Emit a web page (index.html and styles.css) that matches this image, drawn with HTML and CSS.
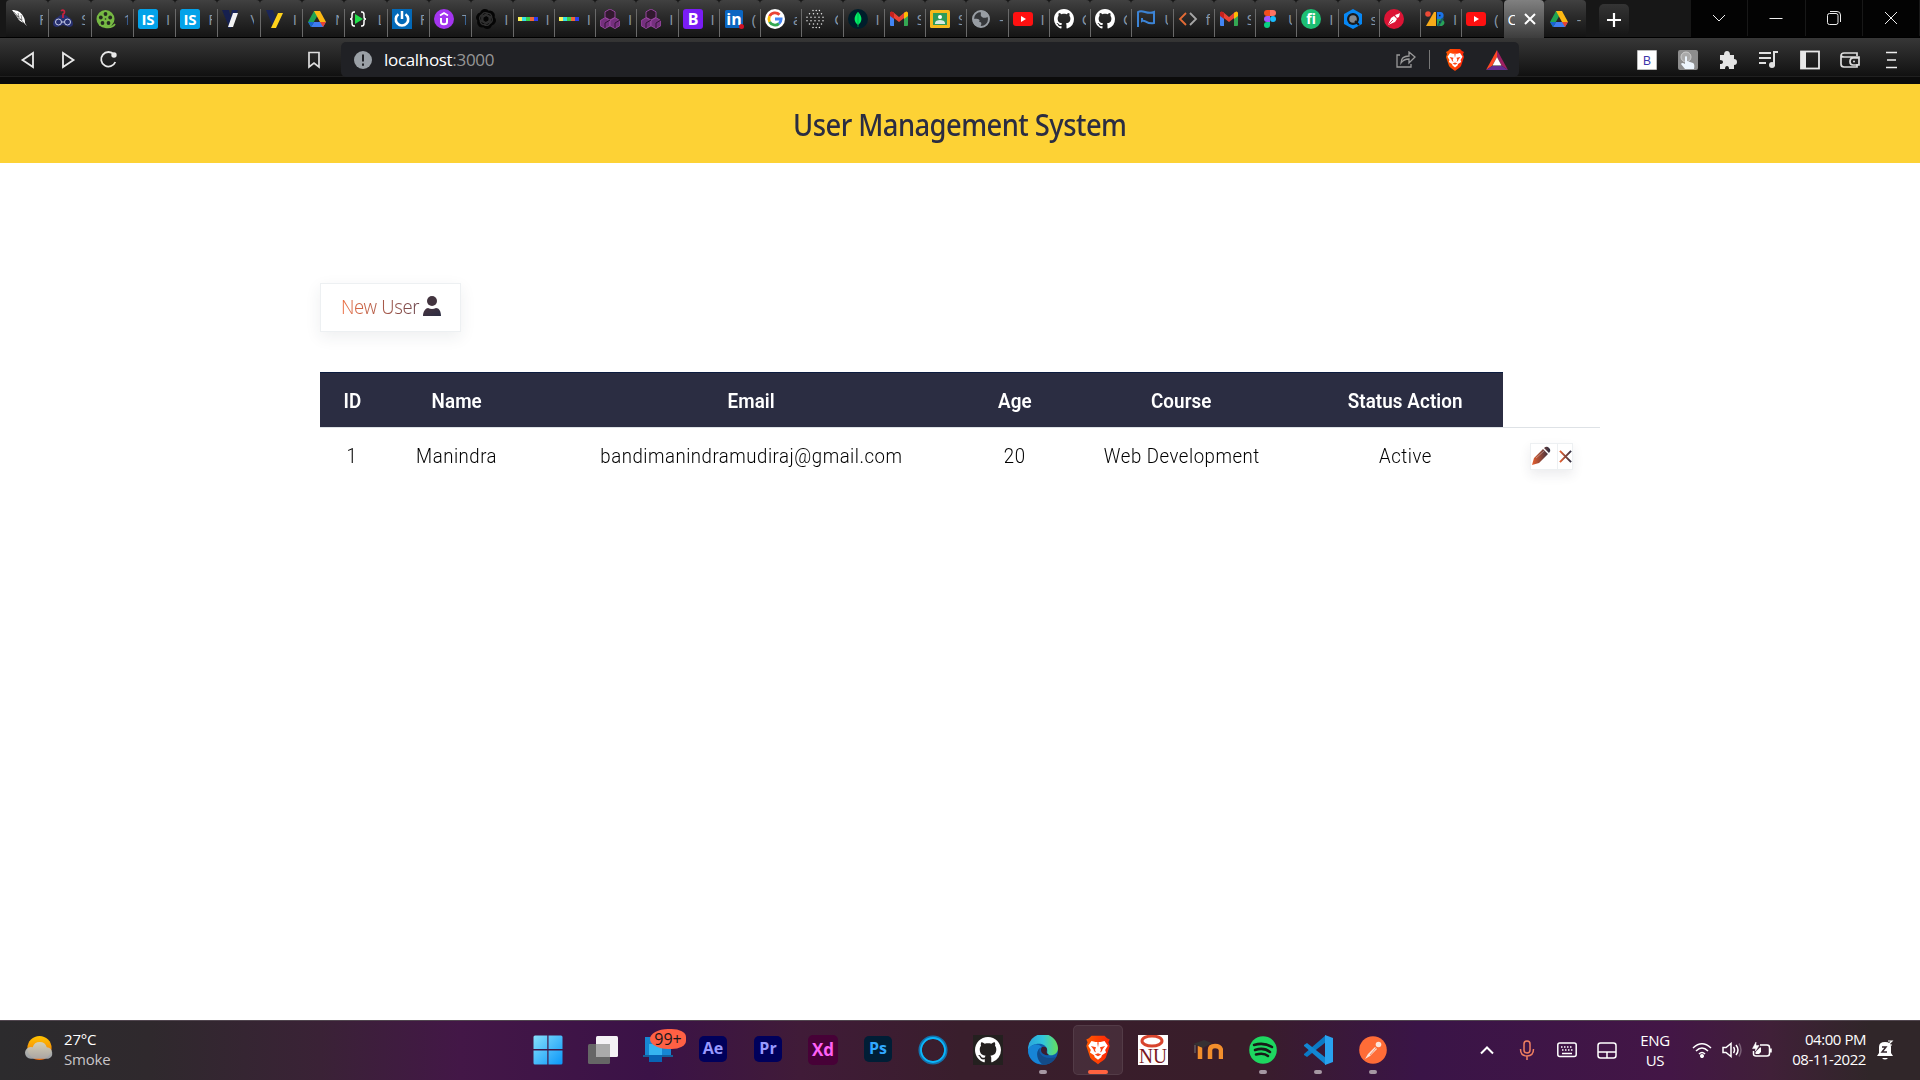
FILE: index.html
```html
<!DOCTYPE html>
<html lang="en">
<head>
<meta charset="utf-8">
<title>User Management System</title>
<link rel="stylesheet" href="styles.css">
</head>
<body>
<svg class="defs" aria-hidden="true">
  <defs>
    <linearGradient id="ink" x1="0" y1="0" x2="1" y2="0"><stop offset="0" stop-color="#e95f2e"/><stop offset="1" stop-color="#2b2d42"/></linearGradient>
    <linearGradient id="dark" x1="0" y1="0" x2="1" y2="1"><stop offset="0" stop-color="#493541"/><stop offset="1" stop-color="#2b2d42"/></linearGradient>
    <linearGradient id="sun" x1="0" y1="0" x2="0" y2="1"><stop offset="0" stop-color="#ffc400"/><stop offset="1" stop-color="#f26a0a"/></linearGradient>
    <linearGradient id="cloud" x1="0" y1="0" x2="0" y2="1"><stop offset="0" stop-color="#d2d2c2"/><stop offset="1" stop-color="#a5a9ae"/></linearGradient>
    <linearGradient id="win" x1="0" y1="0" x2="1" y2="1"><stop offset="0" stop-color="#87e0fc"/><stop offset="1" stop-color="#0a96f8"/></linearGradient>
    <linearGradient id="edgeTop" x1="0" y1="0" x2="1" y2="0"><stop offset="0" stop-color="#2aa4dc"/><stop offset=".5" stop-color="#31c6dc"/><stop offset="1" stop-color="#66e15a"/></linearGradient>
    <linearGradient id="braveG" x1="0" y1="0" x2="1" y2="0"><stop offset="0" stop-color="#ff5a00"/><stop offset="1" stop-color="#ff2508"/></linearGradient>
  </defs>
  <symbol id="feather" viewBox="0 0 20 20"><path d="M1 1c5 0 9 2 11 6 2 3 2 5 2 7l2 3-3-3c-3-1-6-3-7-6C4 6 3 3 1 1z" fill="#fff"/><path d="M3 3l10 11M7 4l1 4M4 6l4 2M10 6l1 5M6 9l5 2" stroke="#222" stroke-width=".5"/></symbol>
  <symbol id="robot" viewBox="0 0 20 20"><path d="M5 8c2-3 8-3 10 0 3 1 5 4 5 7 0 2-2 3-4 3l-6-2-6 2c-2 0-4-1-4-3 0-3 2-6 5-7z" fill="#27306f"/><circle cx="5.500" cy="13" r="3" fill="none" stroke="#cbd0ea"/><circle cx="14.500" cy="13" r="3" fill="none" stroke="#cbd0ea"/><path d="M9 13h2" stroke="#cbd0ea"/><path d="M8 2c3-3 5 2 2 3v4" fill="none" stroke="#c8233e" stroke-width="1.700"/></symbol>
  <symbol id="reel" viewBox="0 0 20 20"><circle cx="9.500" cy="10" r="9" fill="#76b943"/><path d="M9 18c5 1 8 0 10-3" fill="none" stroke="#76b943" stroke-width="1.800"/><g fill="#252b20"><circle cx="9.500" cy="5" r="1.900"/><circle cx="4.800" cy="8.500" r="1.900"/><circle cx="14.200" cy="8.500" r="1.900"/><circle cx="6.500" cy="14" r="1.900"/><circle cx="12.500" cy="14" r="1.900"/><circle cx="9.500" cy="10" r=".8"/></g></symbol>
  <symbol id="is" viewBox="0 0 20 20"><rect width="20" height="20" rx="2.500" fill="#03a2e9"/><text x="10" y="15.500" text-anchor="middle" class="ico-text" font-size="15" fill="#fff">IS</text></symbol>
  <symbol id="vw" viewBox="0 0 20 20"><path d="M0 1h7l2 9-2 8z" fill="#16204f"/><path d="M10 1h6L9 19H6z" fill="#1b2659"/><path d="M11 4h5l-5 14H6z" fill="#f3f3f3"/></symbol>
  <symbol id="vy" viewBox="0 0 20 20"><path d="M1 1h7l3 9-3 8z" fill="#1b2659"/><path d="M13 4h5l-7 15H6z" fill="#ffd21c"/></symbol>
  <symbol id="drive" viewBox="0 0 20 20"><path d="M7 2h6l-9 16-3-5z" fill="#20a452"/><path d="M7 2h6l6 11h-6z" fill="#fdb913"/><path d="M4 18l3-5h12l-3 5z" fill="#3f7cf0"/><path d="M13 13h6l-3 5z" fill="#e84335"/><path d="M1 13h6l-3 5z" fill="#1765d2"/></symbol>
  <symbol id="play" viewBox="0 0 20 20"><path d="M6 3H5Q3 3 3 6v2q0 2-2 2 2 0 2 2v2q0 3 2 3h1M12 3h1q2 0 2 3v2q0 2 2 2-2 0-2 2v2q0 3-2 3h-1" fill="none" stroke="#fff" stroke-width="1.500"/><path d="M6 5l8 5-8 5z" fill="#22e04b"/></symbol>
  <symbol id="power" viewBox="0 0 20 20"><path d="M0 0h20v20H0z" fill="#0369b8"/><path d="M6.500 5.200a6.200 6.200 0 1 0 7 0" fill="none" stroke="#fff" stroke-width="2.600"/><path d="M10 2v8" stroke="#fff" stroke-width="2.500"/></symbol>
  <symbol id="udemy" viewBox="0 0 20 20"><circle cx="10" cy="10" r="10" fill="#a435f0"/><path d="M7 9v4c0 3 6 3 6 0V9" fill="none" stroke="#fff" stroke-width="2"/><path d="M6 6.500l4-2.500 4 2.500" fill="none" stroke="#fff" stroke-width="1.800"/></symbol>
  <symbol id="openai" viewBox="0 0 24 24"><path fill="#050505" d="M22.280 9.820a5.980 5.980 0 0 0-.52-4.910 6.050 6.050 0 0 0-6.510-2.900A6.070 6.070 0 0 0 4.980 4.180a5.980 5.980 0 0 0-4 2.900 6.050 6.050 0 0 0 .74 7.100 5.980 5.980 0 0 0 .51 4.910 6.050 6.050 0 0 0 6.510 2.900A5.980 5.980 0 0 0 13.260 24a6.060 6.060 0 0 0 5.770-4.210 5.990 5.990 0 0 0 4-2.900 6.060 6.060 0 0 0-.75-7.070z"/><g fill="none" stroke="#303030" stroke-width="1.700"><path id="petal" d="M12 7.500l5 3v5c0 4-4 5-7 3.500"/><use href="#petal" transform="rotate(60 12 12)"/><use href="#petal" transform="rotate(120 12 12)"/><use href="#petal" transform="rotate(180 12 12)"/><use href="#petal" transform="rotate(240 12 12)"/><use href="#petal" transform="rotate(300 12 12)"/></g></symbol>
  <symbol id="strip" viewBox="0 0 20 20"><path d="M0 8h4v4H0z" fill="#fdf35c"/><path d="M4 8h5v4H4z" fill="#37dfe6"/><path d="M8 8h4v4H8z" fill="#39d64c"/><path d="M12 8h4v4h-4z" fill="#ef6638"/><path d="M16 8h4v4h-4z" fill="#2d3cf0"/></symbol>
  <symbol id="hexes" viewBox="0 0 20 20"><g fill="#75307e" stroke="#a04aa8" stroke-width=".9"><path d="M10 0l5 2.800v5.600L10 11 5 8.400V2.800z" fill="#32192f"/><path d="M5 8.700l5 2.800v5.300L5 19.500.3 16.800v-5.300z"/><path d="M15 8.700l4.700 2.800v5.300L15 19.500l-5-2.700v-5.300z"/></g><path d="M5 14l5-3M5 14v5M15 14l5-3M15 14v5" stroke="#341536" fill="none"/></symbol>
  <symbol id="boot" viewBox="0 0 20 20"><rect width="20" height="20" rx="3" fill="#7a1cf5"/><text x="10" y="15.800" text-anchor="middle" class="ico-text" font-size="16" fill="#fff">B</text></symbol>
  <symbol id="linkedin" viewBox="0 0 20 20"><rect x="1" y="1" width="18" height="18" rx="1.500" fill="#0a66c2"/><text x="10" y="15.500" text-anchor="middle" class="ico-text" font-size="16" fill="#fff">in</text><circle cx="17.500" cy="17.500" r="2.500" fill="#d11124"/></symbol>
  <symbol id="google" viewBox="0 0 20 20"><circle cx="10" cy="10" r="10" fill="#fff"/><g fill="none" stroke-width="2.800"><path d="M14.500 5.800A6.100 6.100 0 0 0 4.600 7.200" stroke="#ea4335"/><path d="M4.600 7.200a6.100 6.100 0 0 0 0 5.600" stroke="#fbbc05"/><path d="M4.600 12.800A6.100 6.100 0 0 0 14 14.600" stroke="#34a853"/><path d="M14 14.600A6.100 6.100 0 0 0 16.100 10H10" stroke="#4285f4"/></g></symbol>
  <symbol id="dots" viewBox="0 0 20 20"><g fill="none" stroke="#e8e8e8" stroke-linecap="round" stroke-width="1.500"><path d="M7 1.500h7" stroke-dasharray="0 3.200"/><path d="M3.500 4.800h14" stroke-dasharray="0 4"/><path d="M1 8.300h19M1 11.700h19" stroke-dasharray="0 4"/><path d="M3.500 15h14" stroke-dasharray="0 4"/><path d="M7 18.500h7" stroke-dasharray="0 3.200"/></g></symbol>
  <symbol id="mongo" viewBox="0 0 20 20"><circle cx="10" cy="10" r="10" fill="#001e2b"/><path d="M10 3c5 5 4 10 0 13-4-3-5-8 0-13z" fill="#00ed64"/><path d="M10 3v15" stroke="#00a64d" stroke-width=".8"/></symbol>
  <symbol id="gmail" viewBox="0 0 20 20"><path d="M1 5l4 3v9H2q-1 0-1-1z" fill="#4285f4"/><path d="M19 5l-4 3v9h3q1 0 1-1z" fill="#34a853"/><path d="M1 6V4q1-2 3-1l6 5 6-5q2-1 3 1v2l-9 7z" fill="#ea4335"/><path d="M15 4q3-3 4 0v3l-4 3z" fill="#fbbc04"/><path d="M5 4Q2 1 1 4v3l4 3z" fill="#c5221f"/></symbol>
  <symbol id="classroom" viewBox="0 0 20 20"><rect y="1" width="20" height="18" rx="1.500" fill="#f6b91c"/><path d="M3 4h14v12H3z" fill="#2e9b59"/><circle cx="10" cy="8" r="2" fill="#fff"/><path d="M5 14c0-4 10-4 10 0v1H5z" fill="#d7eadf"/></symbol>
  <symbol id="globe" viewBox="0 0 20 20"><circle cx="10" cy="10" r="8" fill="#35373a" stroke="#989da3" stroke-width="2"/><path d="M8 2c4 2 0 4 3 6 2 2 6 0 7-1-1-4-5-6-10-5zM2 10c5-1 8 1 6 3 3 0 3 2 1 5-5 0-8-4-7-8z" fill="#989da3"/></symbol>
  <symbol id="youtube" viewBox="0 0 20 20"><rect y="3" width="20" height="14" rx="3" fill="#f11"/><path d="M8 7l5 3-5 3z" fill="#fff"/></symbol>
  <symbol id="github" viewBox="0 0 16 16"><path fill="#fff" d="M8 0C3.580 0 0 3.580 0 8c0 3.540 2.290 6.530 5.470 7.590.4.070.55-.17.55-.38 0-.19-.01-.82-.01-1.490-2.010.37-2.530-.49-2.690-.94-.09-.23-.48-.94-.82-1.130-.28-.15-.68-.52-.01-.53.63-.01 1.080.58 1.230.82.72 1.210 1.870.87 2.330.66.07-.52.28-.87.51-1.070-1.780-.2-3.640-.89-3.640-3.950 0-.87.31-1.590.82-2.150-.08-.2-.36-1.020.08-2.120 0 0 .67-.21 2.200.82.64-.18 1.320-.27 2-.27s1.360.09 2 .27c1.530-1.040 2.200-.82 2.200-.82.44 1.100.16 1.920.08 2.120.51.56.82 1.270.82 2.150 0 3.070-1.870 3.750-3.650 3.950.29.25.54.73.54 1.480 0 1.070-.01 1.930-.01 2.200 0 .21.15.46.55.38A8.010 8.010 0 0 0 16 8c0-4.420-3.580-8-8-8z"/></symbol>
  <symbol id="flag" viewBox="0 0 20 20"><path d="M2 18V3c5-3 9 3 16 0v11c-7 2-9-4-12-2v-3" fill="none" stroke="#3c84d6" stroke-width="2"/></symbol>
  <symbol id="code" viewBox="0 0 20 20"><path d="M8 4l-6 6 6 6" fill="none" stroke="#e46b35" stroke-width="1.800"/><path d="M12 4l6 6-6 6" fill="none" stroke="#a6a6a6" stroke-width="1.800"/></symbol>
  <symbol id="figma" viewBox="0 0 20 20"><path d="M10 1H7a3 3 0 0 0 0 6h3z" fill="#f24e1e"/><path d="M10 1h3a3 3 0 0 1 0 6h-3z" fill="#ff7262"/><path d="M10 7H7a3 3 0 0 0 0 6h3z" fill="#a259ff"/><circle cx="13" cy="10" r="3" fill="#1abcfe"/><path d="M7 13h3v3a3 3 0 1 1-3-3z" fill="#0acf83"/></symbol>
  <symbol id="fi" viewBox="0 0 20 20"><circle cx="10" cy="10" r="10" fill="#1dbf73"/><text x="10" y="15" text-anchor="middle" class="ico-text" font-size="14" fill="#fff">fi</text></symbol>
  <symbol id="nut" viewBox="0 0 20 20"><path d="M10 0l9 5v10l-9 5-9-5V5z" fill="#0788f5"/><circle cx="10" cy="10" r="6" fill="#171a1d"/><circle cx="10" cy="10" r="3.800" fill="#85898d"/><path d="M12 12l4 4" stroke="#171a1d" stroke-width="2"/></symbol>
  <symbol id="pen" viewBox="0 0 20 20"><circle cx="10" cy="10" r="10" fill="#dc1435"/><path d="M4 16l3-7 3-2 3 3-2 3z" fill="#fff"/><path d="M11 6l3-1 2-1-1 4-2 1z" fill="#fff"/><path d="M4.500 15.500L9 11" stroke="#dc1435" stroke-width=".8"/></symbol>
  <symbol id="zb" viewBox="0 0 20 20"><circle cx="3" cy="5" r="2.800" fill="#ed4a36"/><path d="M9 3h2v14H1z" fill="#f7ab19"/><path d="M12 3h4q4 1 2 7h-6z" fill="#1a73e8"/><path d="M12 10h5q5 4 0 7h-5z" fill="#28a357"/><path d="M13 17l5-8" stroke="#175f6b" stroke-width="2"/><path d="M14 6.500h1.500M14 13h1.500" stroke="#222" stroke-width="1.500"/></symbol>
  <symbol id="brave" viewBox="0 0 20 22"><path d="M5 0h10l2 2 2 1-1 2 1 3-3 9c-1 2-4 3-6 5-2-2-5-3-6-5L1 8l1-3-1-2 2-1z" fill="url(#braveG)"/><path d="M5 4l3 .8h4L15 4l2.500 3.800L15.500 11l.7 2-3.200 2-.5 1.500L10 18.500 7.500 16.500 7 15l-3.200-2 .7-2-2-3.200z" fill="#fff"/><path d="M4.500 8l4 .8-.8 2.200.8 2-1.500-1-.5-1.500zM15.500 8l-4 .8.800 2.200-.8 2 1.500-1 .5-1.500zM9.400 5h1.200L10 9zM7.500 14.500l2.500-1 2.500 1-2.500 1.300z" fill="#fb4617"/></symbol>
  <symbol id="bat" viewBox="0 0 22 20"><path d="M11 0v7l-5 9-6 4z" fill="#ff4724"/><path d="M11 0l11 20-6-4-5-9z" fill="#9e1f63"/><path d="M0 20l6-4h10l6 4z" fill="#662d91"/><path d="M11 7l4.500 8.500h-9z" fill="#fff"/></symbol>
  <symbol id="person" viewBox="0 0 18 20"><ellipse cx="9" cy="5" rx="5" ry="5" fill="#43343f"/><path d="M0 20c0-5 3-8 5-8q4 2 8 0c3 0 5 3 5 8z" fill="url(#dark)"/></symbol>
</svg>

<header class="browser">
  <div class="tabstrip">
    <div class="tabs">
      <div class="tab wide first"><svg><use href="#feather"/></svg><span>F</span></div>
      <div class="tab wide"><svg><use href="#robot"/></svg><span>S</span></div>
      <div class="tab wide"><svg><use href="#reel"/></svg><span>1</span></div>
      <div class="tab wide"><svg><use href="#is"/></svg><span>I</span></div>
      <div class="tab wide"><svg><use href="#is"/></svg><span>F</span></div>
      <div class="tab wide"><svg><use href="#vw"/></svg><span>V</span></div>
      <div class="tab wide"><svg><use href="#vy"/></svg><span>I</span></div>
      <div class="tab wide"><svg><use href="#drive"/></svg><span>N</span></div>
      <div class="tab wide"><svg><use href="#play"/></svg><span>L</span></div>
      <div class="tab wide"><svg><use href="#power"/></svg><span>F</span></div>
      <div class="tab wide"><svg><use href="#udemy"/></svg><span>T</span></div>
      <div class="tab"><svg><use href="#openai"/></svg><span>I</span></div>
      <div class="tab"><svg><use href="#strip"/></svg><span>I</span></div>
      <div class="tab"><svg><use href="#strip"/></svg><span>I</span></div>
      <div class="tab"><svg><use href="#hexes"/></svg><span>I</span></div>
      <div class="tab"><svg><use href="#hexes"/></svg><span>I</span></div>
      <div class="tab"><svg><use href="#boot"/></svg><span>I</span></div>
      <div class="tab"><svg><use href="#linkedin"/></svg><span>(</span></div>
      <div class="tab"><svg><use href="#google"/></svg><span>a</span></div>
      <div class="tab"><svg><use href="#dots"/></svg><span>C</span></div>
      <div class="tab"><svg><use href="#mongo"/></svg><span>I</span></div>
      <div class="tab"><svg><use href="#gmail"/></svg><span>S</span></div>
      <div class="tab"><svg><use href="#classroom"/></svg><span>S</span></div>
      <div class="tab"><svg><use href="#globe"/></svg><span>-</span></div>
      <div class="tab"><svg><use href="#youtube"/></svg><span>I</span></div>
      <div class="tab"><svg><use href="#github"/></svg><span>C</span></div>
      <div class="tab"><svg><use href="#github"/></svg><span>C</span></div>
      <div class="tab"><svg><use href="#flag"/></svg><span>U</span></div>
      <div class="tab"><svg><use href="#code"/></svg><span>f</span></div>
      <div class="tab"><svg><use href="#gmail"/></svg><span>S</span></div>
      <div class="tab"><svg><use href="#figma"/></svg><span>U</span></div>
      <div class="tab"><svg><use href="#fi"/></svg><span>I</span></div>
      <div class="tab"><svg><use href="#nut"/></svg><span>s</span></div>
      <div class="tab"><svg><use href="#pen"/></svg></div>
      <div class="tab"><svg><use href="#zb"/></svg><span>I</span></div>
      <div class="tab"><svg><use href="#youtube"/></svg><span>(</span></div>
      <div class="tab active"><span>C</span><svg viewBox="0 0 12 12"><path d="M1 1l10 10M11 1L1 11" stroke="#fff" stroke-width="2"/></svg></div>
      <div class="tab last"><svg><use href="#drive"/></svg><span>-</span></div>
    </div>
    <div class="newtab"><svg viewBox="0 0 16 16"><path d="M8 1v14M1 8h14" stroke="#fff" stroke-width="2.200"/></svg></div>
    <div class="window-controls">
      <div><svg viewBox="0 0 14 14"><path d="M1 4l6 6 6-6"/></svg></div>
      <div><svg viewBox="0 0 14 14"><path d="M.5 7.500h13"/></svg></div>
      <div><svg viewBox="0 0 14 14"><rect x=".5" y="2.500" width="10.500" height="11" rx="2"/><path d="M3 .5h7q3.500 0 3.500 3.500v7"/></svg></div>
      <div><svg viewBox="0 0 14 14"><path d="M1 1l12 12M13 1L1 13"/></svg></div>
    </div>
  </div>

  <div class="toolbar">
    <div class="nav">
      <svg viewBox="0 0 18 18"><path d="M14 2v14L3.500 9z"/></svg>
      <svg viewBox="0 0 18 18"><path d="M4 2v14l10.500-7z"/></svg>
      <svg viewBox="0 0 18 18"><path d="M15 3.500A7.300 7.300 0 1 0 16.300 11"/><circle cx="15" cy="4" r="1.800" fill="#e8e8e8"/></svg>
    </div>
    <svg class="bookmark" viewBox="0 0 14 18"><path d="M2 1.500h10V16l-5-4-5 4z"/></svg>
    <div class="address">
      <svg class="info" viewBox="0 0 18 18"><circle cx="9" cy="9" r="9" fill="#9aa0a6"/><path d="M9 3.500v7M9 12.500v2.300" stroke="#202125" stroke-width="2"/></svg>
      <div class="url">localhost<span>:3000</span></div>
      <svg class="share" viewBox="0 0 20 18"><path d="M4 4H1v12h14v-3M5 12c0-5 3-7 8-7V1l6 5-6 6V8c-4 0-6 1-8 4z"/></svg>
      <i class="divider"></i>
      <svg class="shield"><use href="#brave"/></svg>
      <svg class="bat"><use href="#bat"/></svg>
    </div>
    <div class="extensions">
      <svg viewBox="0 0 20 20"><path d="M0 0h20v20H0z" fill="#fff" stroke="#777"/><text x="10" y="14.500" text-anchor="middle" class="plain-text" font-size="12" fill="#3b35a8">B</text></svg>
      <svg viewBox="0 0 20 20"><rect width="20" height="20" rx="2" fill="#8d8d8d"/><circle cx="8" cy="7" r="5" fill="#aaa" stroke="#ccc"/><path d="M7 7q1-2 2 0v4l6 2q2 1 1 6H7l-4-5q1-2 4 0z" fill="#edf5fd"/></svg>
      <svg viewBox="0 0 20 20"><path d="M2 5h4q0-4 3-4t3 4h4v4q3 0 3 3t-3 3v4h-5q0-3-2-3t-2 3H2v-5q3 0 3-2T2 10z" fill="#e4e4e4"/></svg>
      <svg viewBox="0 0 20 20"><path d="M0 3h12M0 8h12M0 13h7M15 16V2h4" fill="none" stroke="#e0e0e0" stroke-width="2"/><circle cx="13" cy="15" r="3" fill="#e0e0e0"/></svg>
      <svg viewBox="0 0 20 20"><rect x="1" y="1.500" width="18" height="17" fill="none" stroke="#e8e8e8" stroke-width="1.800"/><path d="M1 1h5v18H1z" fill="#e8e8e8"/></svg>
      <svg viewBox="0 0 20 20"><path d="M17 6V3H4Q1 3 1 6v8q0 3 3 3h13v-3M1 5q0 2 3 2h15v8h-6q-3 0-3-3.500T13 8h6" fill="none" stroke="#ddd" stroke-width="1.700"/><circle cx="14" cy="11.500" r="1" fill="#ddd"/></svg>
      <svg viewBox="0 0 20 20"><path d="M5 2.500h11M6 10h9M5 17.500h11" stroke="#eee" stroke-width="1.700"/></svg>
    </div>
  </div>
</header>

<main>
  <div class="banner"><h1>User Management System</h1></div>
  <div class="content">
    <a class="new-user"><span>New User</span><svg><use href="#person"/></svg></a>
    <table>
      <colgroup><col class="c-id"><col class="c-name"><col class="c-email"><col class="c-age"><col class="c-course"><col class="c-status"><col class="c-tools"></colgroup>
      <thead><tr><th><span>ID</span></th><th><span>Name</span></th><th><span>Email</span></th><th><span>Age</span></th><th><span>Course</span></th><th><span>Status Action</span></th><td></td></tr></thead>
      <tbody><tr>
        <td><span>1</span></td><td><span>Manindra</span></td><td><span>bandimanindramudiraj@gmail.com</span></td><td><span>20</span></td><td><span>Web Development</span></td><td><span>Active</span></td>
        <td><div class="row-tools">
          <a class="edit"><svg viewBox="0 0 20 20"><path d="M1 19l2-7L12 3l5 5-9 9zM13 2q2-2 4-1l2 2q1 2-1 4z" fill="url(#ink)"/><path d="M5 12l8-7" stroke="#eee" stroke-width=".4"/></svg></a>
          <a class="delete"><svg viewBox="0 0 14 14"><path d="M1 1l12 12M13 1L1 13" stroke="url(#ink)" stroke-width="2.100"/></svg></a>
        </div></td>
      </tr></tbody>
    </table>
  </div>
</main>

<footer class="taskbar">
  <div class="weather">
    <svg viewBox="0 0 30 28"><circle cx="15" cy="13" r="12.500" fill="url(#sun)"/><path d="M6 24a6 6 0 0 1 0-12q1 0 2 .3a7.500 7.500 0 0 1 14.500 0 6 6 0 0 1 1.500 11.700z" fill="url(#cloud)" opacity=".93"/></svg>
    <div><div>27°C</div><div class="dim">Smoke</div></div>
  </div>
  <div class="apps">
    <div class="app"><svg viewBox="0 0 30 30"><path d="M.5 2q0-1.500 1.500-1.500h12.300V14H.5zM15.500.5H28q1.500 0 1.500 1.500v12h-14zM.5 15.500h13.800v14H2q-1.500 0-1.500-1.500zM15.500 15.500h14V28q0 1.500-1.500 1.500H15.500z" fill="url(#win)"/></svg></div>
    <div class="app"><svg viewBox="0 0 30 30"><rect y="9" width="22" height="20" rx="1.500" fill="#666"/><rect x="8" y="1" width="22" height="21" rx="1.500" fill="#f4f2f5"/><path d="M8 9h14v13H8z" fill="#aaa"/></svg></div>
    <div class="app"><svg viewBox="0 0 30 30"><path d="M2 2h26v18H2z" fill="#1686d2"/><path d="M0 20h30v2H0z" fill="#155f9b"/><path d="M6 9h13v15H6z" fill="#35b4f1"/><path d="M6 20h13v7H6z" fill="#0863b5"/></svg><b class="badge">99+</b></div>
    <div class="app"><svg viewBox="0 0 30 30"><rect x="1" y="1" width="28" height="26" rx="5" fill="#00005b"/><text x="15" y="19" text-anchor="middle" class="ico-text" font-size="16" fill="#9999ff">Ae</text></svg></div>
    <div class="app"><svg viewBox="0 0 30 30"><rect x="1" y="1" width="28" height="26" rx="5" fill="#00005b"/><text x="15" y="19" text-anchor="middle" class="ico-text" font-size="16" fill="#9999ff">Pr</text></svg></div>
    <div class="app"><svg viewBox="0 0 30 30"><rect width="30" height="30" rx="5" fill="#470137"/><text x="15" y="21" text-anchor="middle" class="ico-text" font-size="17" fill="#ff61f6">Xd</text></svg></div>
    <div class="app"><svg viewBox="0 0 30 30"><rect x="1" y="1" width="28" height="26" rx="5" fill="#001e36"/><text x="15" y="19" text-anchor="middle" class="ico-text" font-size="16" fill="#31a8ff">Ps</text></svg></div>
    <div class="app"><svg viewBox="0 0 30 30"><circle cx="15" cy="15" r="12.800" fill="none" stroke="#1173ae" stroke-width="3.500"/><circle cx="15" cy="15" r="12" fill="none" stroke="#0cb6fb" stroke-width="1.800"/></svg></div>
    <div class="app"><svg viewBox="0 0 30 30"><path d="M0 0h30v30H0z" fill="#24201f"/><use href="#github" x="2" y="2" width="26" height="26"/></svg></div>
    <div class="app running"><svg viewBox="0 0 30 30"><circle cx="15" cy="15" r="15" fill="#0f5cab"/><path d="M0 15A15 15 0 0 1 30 13c0 6-5 8-9 7-3-1-1-3-2-6-2-7-15-7-19 1z" fill="url(#edgeTop)"/><path d="M0 15c2-5 9-8 14-3-7 2-5 12 1 17C6 30 0 23 0 15z" fill="#1785d6"/><path d="M12 13c-3 5 4 13 16 9-4 7-10 8-13 8-6-4-8-13-3-17z" fill="#134b89"/><path d="M14 12q5-1 5 3c-1 2 0 4 2 5-6 1-10-4-7-8z" fill="#3b1d30"/></svg></div>
    <div class="app selected"><svg viewBox="0 0 30 30"><use href="#brave" x="2" y="0" width="26" height="30"/></svg></div>
    <div class="app"><svg viewBox="0 0 30 30"><path d="M0 0h30v30H0z" fill="#fff"/><ellipse cx="14" cy="6" rx="10" ry="5" fill="none" stroke="#d8442d" stroke-width="3"/><text x="15" y="27.500" text-anchor="middle" class="serif-text" font-size="21" textLength="28" lengthAdjust="spacingAndGlyphs" fill="#7a1822">NU</text></svg></div>
    <div class="app"><svg viewBox="0 0 30 30"><path d="M7 24V11M17 24v-9q0-4 5-4t6 4v9" fill="none" stroke="#f28e2c" stroke-width="4.500"/><path d="M0 9l11-4 8 3-9 5z" fill="#353133"/><path d="M2 10v8" stroke="#777"/></svg></div>
    <div class="app running"><svg viewBox="0 0 30 30"><circle cx="15" cy="15" r="13.800" fill="#1ed760"/><path d="M6 10q10-3 18 2M7 15q9-3 15 2M8 19.500q8-2 12 1.500" fill="none" stroke="#171b18" stroke-width="2.500" stroke-linecap="round"/></svg></div>
    <div class="app running"><svg viewBox="0 0 30 30"><path d="M1 20l3 2L23 7V0L1 19z" fill="#0b7ac5"/><path d="M1 10l3-2 19 15v7L1 11z" fill="#1287d3"/><path d="M22 0l8 3v24l-8 3z" fill="#29a2ef"/></svg></div>
    <div class="app running"><svg viewBox="0 0 30 30"><circle cx="15" cy="15" r="13.800" fill="#ff6c37"/><path d="M7 24l3-5 7-7 2 2-7 7z" fill="#fbe5dc"/><circle cx="20.500" cy="9.500" r="2.800" fill="#fbe5dc"/><path d="M12 20l6-7" stroke="#f07b50" stroke-width=".8"/></svg></div>
  </div>
  <div class="tray">
    <svg class="chev" viewBox="0 0 16 16"><path d="M2 11.500l6-6 6 6" stroke-width="2"/></svg>
    <svg class="mic" viewBox="0 0 16 20"><rect x="5" y="1" width="6" height="12" rx="3"/><path d="M1.500 9q0 7 6.500 7t6.500-7M8 16v4"/></svg>
    <svg class="kbd" viewBox="0 0 20 16"><rect x=".8" y="1" width="18.400" height="13.500" rx="2"/><path d="M4 5h12M5 8h11" stroke-dasharray="1.500 1.500"/><path d="M5 11.500h10"/></svg>
    <svg class="pad" viewBox="0 0 20 17"><rect x="1" y="1" width="18" height="15" rx="2.500"/><path d="M1 10h18M10 10v6"/></svg>
    <div class="lang">ENG<br>US</div>
    <div class="status">
      <svg viewBox="0 0 20 16"><path d="M1 6q9-8.500 18 0M4 9q6-6 12 0M7 12q3-3 6 0"/><circle cx="10" cy="14" r="1.300" fill="#fff"/></svg>
      <svg viewBox="0 0 20 16"><path d="M1 5.500h3l5-4v13l-5-4H1zM11.500 5q2 3 0 6M14 3q4 5 0 10"/><path d="M17 1.500q4 6.500 0 13" opacity=".3"/></svg>
      <svg viewBox="0 0 20 16"><path d="M8 3h7q2.500 0 2.500 2.500v6q0 2.500-2.500 2.500H4q-2.500 0-2.500-2V9M19 6.500v4"/><path d="M.5 6.500L4 0v3.500h3L3.500 9V6.500z" fill="#fff" stroke-width=".5"/><path d="M3.500 12v-2L8 5.500h1V10l-2 2z" fill="#fff" stroke="none"/></svg>
    </div>
    <div class="clock">04:00 PM<br>08-11-2022</div>
    <svg class="bell" viewBox="0 0 18 20"><path d="M1 16l2-3V7q0-5 6-5t6 5v6l2 3zM6 18h6q-3 3-6 0z" fill="#fff" stroke="none"/><path d="M6 7h4l-4 5h5" stroke="#33262c"/><path d="M12 1h4l-4 4h4" stroke-width="1.200"/></svg>
  </div>
</footer>
</body>
</html>
```
FILE: styles.css
```css
* { box-sizing: border-box; }
html, body { margin: 0; height: 100%; }
body {
  display: flex;
  flex-direction: column;
  overflow: hidden;
  background: #fff;
  font-family: "Open Sans", "Noto Sans", sans-serif;
}
.defs { position: absolute; width: 0; height: 0; }
svg { display: block; flex: none; }
.ico-text { font-family: "Open Sans", sans-serif; font-weight: 700; }
.plain-text { font-family: "Liberation Sans", sans-serif; }
.serif-text { font-family: "Liberation Serif", serif; }

/* browser chrome */
.browser { height: 84px; flex: none; background: #0b0b0b; }
.tabstrip { display: flex; height: 38px; background: #171717; border-bottom: 1px solid #000; }
.tabs { display: flex; padding-left: 6px; }
.tab {
  display: flex;
  align-items: center;
  width: 41.25px;
  height: 37px;
  padding-left: 5px;
  overflow: hidden;
  color: #8797a8;
  font-size: 15px;
  background: linear-gradient(#414141, #2a2a2a 45%, #141414);
  border-radius: 4px 4px 0 0;
  position: relative;
}
.tab::before { content: ""; position: absolute; left: 0; top: 9px; bottom: 0; width: 1px; background: #696969; }
.tab.wide { width: 42.3px; }
.tab.first::before, .tab.active::before, .tab.last::before { display: none; }
.tab svg { width: 20px; height: 20px; }
.tab span { width: 4px; margin-left: 8px; overflow: hidden; }
.tab.active { width: 40px; padding-left: 4px; margin-left: 1px; height: 38px; background: linear-gradient(#808080, #3d3d3d); color: #fff; }
.tab.active span { margin-left: 0; width: 7px; }
.tab.active svg { width: 12px; height: 12px; margin-left: 9px; }
.tab.last { width: 42px; margin-left: 0; }
.newtab {
  display: grid;
  place-items: center;
  width: 30px;
  height: 31px;
  margin: 4px 0 0 13px;
  border-radius: 5px;
  background: linear-gradient(#343434, #171717);
}
.newtab svg { width: 16px; height: 16px; }
.window-controls { display: flex; width: 229px; margin-left: auto; background: #030303; }
.window-controls div { flex: 1; display: grid; place-items: center; height: 36px; border-right: 1px solid #181818; }
.window-controls svg { width: 14px; height: 14px; fill: none; stroke: #eee; }

.toolbar { display: flex; align-items: center; height: 39px; background: linear-gradient(#373737, #111); border-bottom: 1px solid #202020; }
.nav { display: flex; gap: 22px; margin-top: 6px; padding-left: 19px; }
.nav svg { width: 18px; height: 18px; fill: none; stroke: #e8e8e8; stroke-width: 1.8; }
.bookmark { width: 14px; height: 18px; margin: 6px 0 0 190px; fill: none; stroke: #ddd; stroke-width: 1.7; }
.address { display: flex; align-items: center; align-self: flex-end; width: 1178px; height: 35px; margin-left: 20px; margin-bottom: -1px; padding-left: 13px; background: #202125; border-radius: 5px; }
.info { width: 18px; height: 18px; }
.url { width: 1012px; margin-left: 12px; padding-top: 1px; font-size: 17px; letter-spacing: -.32px; line-height: 32px; color: #fff; }
.url span { color: #969696; }
.share { width: 20px; height: 18px; fill: none; stroke: #999; stroke-width: 1.3; }
.divider { width: 1px; height: 19px; margin-left: 13px; background: #777; }
.shield { width: 20px; height: 22px; margin-left: 15px; }
.bat { width: 22px; height: 20px; margin-left: 21px; }
.extensions { display: flex; justify-content: space-between; width: 264px; margin: 6px 19px 0 auto; }
.extensions svg { width: 20px; height: 20px; }

/* page */
main { flex: 1; }
.banner { display: grid; place-items: center; height: 79px; background: #fdd235; }
h1 { margin: 2px 0 0; color: #2b2d42; font: 500 30px/40px "Noto Sans", sans-serif; letter-spacing: -.6px; transform: scaleX(.912); }
.content { width: 1280px; margin: 0 auto; padding-top: 120px; color: #000; font-family: Roboto, sans-serif; }
.new-user {
  display: flex;
  align-items: center;
  width: 141px;
  height: 49px;
  padding-left: 20px;
  background: #fff;
  border: 1px solid #edf0f2;
  box-shadow: 0 5px 15px rgba(43, 45, 66, .08);
}
.new-user span {
  width: 90px;
  margin: -2px -8px 0 0;
  font: 300 20px/28px "Noto Sans", sans-serif;
  letter-spacing: -.35px;
  white-space: nowrap;
  color: transparent;
  background: linear-gradient(90deg, #ee7044, #65434d);
  background-clip: text;
  transform: scaleX(.92);
  transform-origin: left;
}
.new-user svg { width: 18px; height: 20px; margin-top: -3px; }
table { width: 1280px; margin-top: 40px; table-layout: fixed; border-collapse: collapse; text-align: center; font-size: 20px; }
.c-id { width: 64px; }
.c-name { width: 145px; }
.c-email { width: 444px; }
.c-age { width: 83px; }
.c-course { width: 251px; }
.c-status { width: 196px; }
.c-tools { width: 97px; }
th, td { padding: 0; }
thead tr { height: 55px; border-bottom: 1px solid #dee2e6; }
th { padding-top: 2px; background: #2b2d42; border-top: 1px solid #0c1c40; color: #fff; font-weight: 600; letter-spacing: .1px; }
th span, tbody span { display: inline-block; transform: scaleX(.93); }
th span { transform: scaleX(.94); }
tbody tr { height: 57px; }
tbody td { padding-bottom: 1px; font-weight: 300; letter-spacing: .55px; }
.row-tools { display: flex; width: 43px; height: 27px; margin: 1px 0 0 27px; border: 1px solid #edf0f2; background: #fff; box-shadow: 0 5px 12px rgba(43, 45, 66, .09); }
.edit, .delete { display: grid; place-items: center; }
.edit { width: 27px; border-right: 1px solid #edf0f2; padding-right: 6px; }
.edit svg { width: 20px; height: 20px; }
.delete { width: 14px; }
.delete svg { width: 13px; height: 13px; }

/* taskbar */
.taskbar {
  display: grid;
  grid-template-columns: 520px 899px 1fr;
  height: 60px;
  flex: none;
  border-top: 1px solid #51464f;
  color: #fff;
  font-size: 15px;
  line-height: 20px;
  background: linear-gradient(90deg, #2c2b2d 0, #2f292d 150px, #3a2236 320px, #431747 460px, #3b1247 650px, #401b38 800px, #391e2c 960px, #391d2a 1250px, #3a1447 1420px, #431646 1670px, #402038 1770px, #302629 1870px, #302629 100%);
}
.weather { display: flex; align-items: flex-start; padding: 8px 0 0 25px; gap: 10px; letter-spacing: -.2px; }
.weather svg { width: 29px; height: 28px; margin-top: 6px; }
.dim { color: #c9c5c8; }
.apps { display: flex; gap: 5px; align-items: center; height: 50px; margin-top: 4px; padding-left: 3px; }
.app { position: relative; display: grid; place-items: center; width: 50px; height: 50px; border-radius: 5px; }
.app svg { width: 30px; height: 30px; }
.selected { background: rgba(255, 255, 255, .07); border: 1px solid rgba(255, 255, 255, .07); }
.running::after, .selected::after { content: ""; position: absolute; left: 21px; bottom: 1px; width: 8px; height: 4px; border-radius: 2px; background: #a698a3; }
.selected::after { left: 14px; bottom: 0; width: 20px; background: #ff6240; }
.badge { position: absolute; left: 17px; top: 4px; width: 36px; height: 20px; background: #ff6044; border-radius: 50% 40% 40% 50%; color: #17171c; text-align: center; font: 400 16px/20px "Open Sans", sans-serif; }
.tray { display: flex; align-items: center; padding-left: 60px; height: 58px; }
.tray svg { fill: none; stroke: #fff; stroke-width: 1.5; }
.chev { width: 16px; height: 16px; }
.tray .mic { width: 16px; height: 20px; margin-left: 24px; stroke: #f18061; }
.kbd { width: 20px; height: 16px; margin-left: 22px; }
.pad { width: 20px; height: 17px; margin-left: 20px; }
.lang { width: 30px; margin: -1px 0 0 23px; text-align: center; letter-spacing: -.4px; }
.status { display: flex; gap: 10px; margin-left: 22px; }
.status svg { width: 20px; height: 16px; }
.clock { width: 76px; margin: -2px 0 0 18px; text-align: right; letter-spacing: -.45px; white-space: nowrap; }
.bell { width: 18px; height: 20px; margin-left: 10px; }
```
